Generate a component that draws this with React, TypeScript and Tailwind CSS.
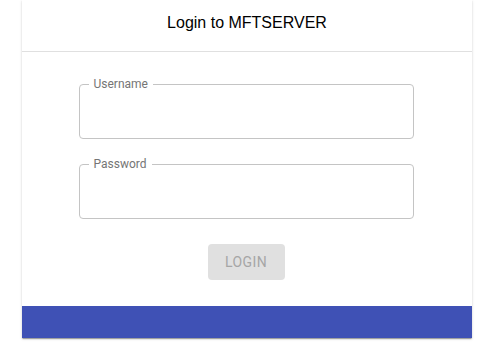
import React from "react";

function Field({ label }: { label: string }) {
  return (
    <div className="relative h-[55px] w-[335px] rounded-[4px] border border-[#c4c4c4]">
      <span className="absolute -top-[9px] left-[9px] bg-white px-[5px] text-[12px] leading-[16px] text-[#757575] [font-family:Roboto,'Liberation_Sans',sans-serif]">
        {label}
      </span>
    </div>
  );
}

export default function App() {
  return (
    <div className="min-h-[345px] w-[486px] bg-white">
      <div className="ml-[22px] w-[450px] bg-white shadow-[0_2px_1px_-1px_rgba(0,0,0,0.2),0_1px_1px_0_rgba(0,0,0,0.14),0_1px_3px_0_rgba(0,0,0,0.12)]">
        <div className="flex h-[52px] items-start justify-center border-b border-[#e0e0e0] pt-[13px]">
          <span className="text-[16px] leading-[20px] text-black [font-family:'Liberation_Sans',Arial,sans-serif]">
            Login to MFTSERVER
          </span>
        </div>
        <div className="flex flex-col items-center pt-[32px] pb-[26px] pr-[2px]">
          <Field label="Username" />
          <div className="h-[25px]" />
          <Field label="Password" />
          <div className="h-[25px]" />
          <button className="flex h-[36px] w-[77px] items-center justify-center rounded-[4px] bg-[#e0e0e0] text-[14px] tracking-[0.03em] text-[#a6a6a6] [font-family:Roboto,'Liberation_Sans',sans-serif]">
            LOGIN
          </button>
        </div>
        <div className="h-[32px] bg-[#3f51b5]" />
      </div>
    </div>
  );
}
